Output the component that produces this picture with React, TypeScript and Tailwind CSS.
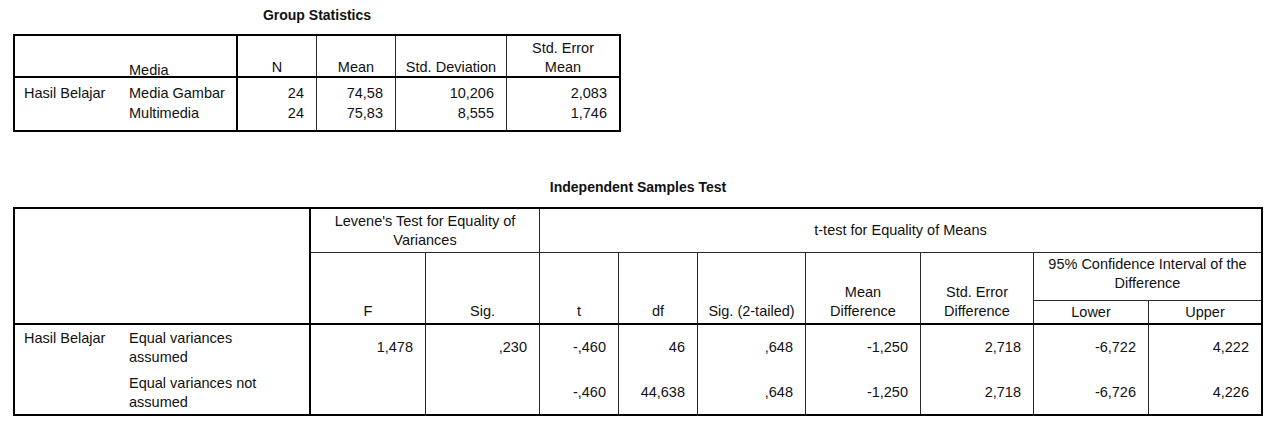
import React from "react";

const thinR = "border-r border-r-[#2a2a2a]";

function HeadCell({
  children,
  className = "",
  inner = "",
}: {
  children: React.ReactNode;
  className?: string;
  inner?: string;
}) {
  return (
    <div className={`flex justify-center text-center leading-[19px] ${className}`}>
      <div className={inner}>{children}</div>
    </div>
  );
}

function Val({ v, last = false }: { v: string; last?: boolean }) {
  return (
    <div className={`flex items-center justify-end pr-[12px] leading-[19px] ${last ? "" : thinR}`}>
      {v}
    </div>
  );
}

function Val1({ v, last = false, pt }: { v: string; last?: boolean; pt: string }) {
  return (
    <div className={`text-right pr-[12px] leading-[19px] ${pt} ${last ? "" : thinR}`}>{v}</div>
  );
}

export default function App() {
  return (
    <div className="w-[1278px] h-[432px] bg-white text-[#111] text-[14.5px] font-['Liberation_Sans',Arial,sans-serif] pt-[6px] overflow-hidden">
      {/* Group Statistics */}
      <div className="ml-[13px] w-[608px] text-center font-bold text-[14px] leading-[19px] h-[19px]">
        Group Statistics
      </div>
      <div className="ml-[13px] mt-[9px] w-[608px] border-2 border-black grid grid-cols-[106px_117px_79px_79px_111px_112px] grid-rows-[42px_25px_27px]">
        <div className="col-span-2 border-r-2 border-b-2 border-black flex items-end pl-[114px] leading-[11px]">
          Media
        </div>
        <HeadCell inner="-mb-[1px]" className={`items-end border-b-2 border-b-black ${thinR}`}>N</HeadCell>
        <HeadCell inner="-mb-[1px]" className={`items-end border-b-2 border-b-black ${thinR}`}>Mean</HeadCell>
        <HeadCell inner="-mb-[1px]" className={`items-end border-b-2 border-b-black ${thinR}`}>Std. Deviation</HeadCell>
        <HeadCell inner="-mb-[1px]" className="items-end border-b-2 border-b-black">
          Std. Error
          <br />
          Mean
        </HeadCell>

        <div className="pl-[9px] pt-[6px] leading-[19px]">Hasil Belajar</div>
        <div className="pl-[8px] pt-[6px] leading-[19px] border-r-2 border-black">Media Gambar</div>
        <Val1 v="24" pt="pt-[6px]" />
        <Val1 v="74,58" pt="pt-[6px]" />
        <Val1 v="10,206" pt="pt-[6px]" />
        <Val1 v="2,083" pt="pt-[6px]" last />

        <div className="pl-[9px] pt-[1px] leading-[19px]"></div>
        <div className="pl-[8px] pt-[1px] leading-[19px] border-r-2 border-black">Multimedia</div>
        <Val1 v="24" pt="pt-[1px]" />
        <Val1 v="75,83" pt="pt-[1px]" />
        <Val1 v="8,555" pt="pt-[1px]" />
        <Val1 v="1,746" pt="pt-[1px]" last />
      </div>

      {/* Independent Samples Test */}
      <div className="ml-[13px] mt-[46px] w-[1250px] text-center font-bold text-[14px] leading-[19px] h-[19px]">
        Independent Samples Test
      </div>
      <div className="ml-[13px] mt-[10px] w-[1250px] border-2 border-black grid grid-cols-[106px_190px_115px_114px_79px_79px_108px_115px_113px_115px_112px] grid-rows-[44px_48px_24px_45px_44px]">
        {/* row-dimension header */}
        <div className="col-start-1 col-end-3 row-start-1 row-end-4 border-r-2 border-b-2 border-black"></div>
        {/* group headers */}
        <HeadCell className={`col-start-3 col-end-5 row-start-1 items-center border-b border-b-[#2a2a2a] ${thinR}`}>
          Levene&apos;s Test for Equality of
          <br />
          Variances
        </HeadCell>
        <HeadCell className="col-start-5 col-end-12 row-start-1 items-center border-b border-b-[#2a2a2a]">
          t-test for Equality of Means
        </HeadCell>
        {/* column headers */}
        <HeadCell className={`col-start-3 row-start-2 row-end-4 items-end pb-[2px] border-b-2 border-b-black ${thinR}`}>F</HeadCell>
        <HeadCell className={`col-start-4 row-start-2 row-end-4 items-end pb-[2px] border-b-2 border-b-black ${thinR}`}>Sig.</HeadCell>
        <HeadCell className={`col-start-5 row-start-2 row-end-4 items-end pb-[2px] border-b-2 border-b-black ${thinR}`}>t</HeadCell>
        <HeadCell className={`col-start-6 row-start-2 row-end-4 items-end pb-[2px] border-b-2 border-b-black ${thinR}`}>df</HeadCell>
        <HeadCell className={`col-start-7 row-start-2 row-end-4 items-end pb-[2px] border-b-2 border-b-black ${thinR}`}>Sig. (2-tailed)</HeadCell>
        <HeadCell className={`col-start-8 row-start-2 row-end-4 items-end pb-[2px] border-b-2 border-b-black ${thinR}`}>
          Mean
          <br />
          Difference
        </HeadCell>
        <HeadCell className={`col-start-9 row-start-2 row-end-4 items-end pb-[2px] border-b-2 border-b-black ${thinR}`}>
          Std. Error
          <br />
          Difference
        </HeadCell>
        <HeadCell className="col-start-10 col-end-12 row-start-2 items-end pb-[7px] border-b border-b-[#2a2a2a]">
          95% Confidence Interval of the
          <br />
          Difference
        </HeadCell>
        <HeadCell className={`col-start-10 row-start-3 items-center border-b-2 border-b-black ${thinR}`}>Lower</HeadCell>
        <HeadCell className="col-start-11 row-start-3 items-center border-b-2 border-b-black">Upper</HeadCell>

        {/* row 1 */}
        <div className="pl-[9px] pt-[4px] leading-[19px]">Hasil Belajar</div>
        <div className="pl-[8px] pt-[4px] leading-[19px] border-r-2 border-black">
          Equal variances
          <br />
          assumed
        </div>
        <Val v="1,478" />
        <Val v=",230" />
        <Val v="-,460" />
        <Val v="46" />
        <Val v=",648" />
        <Val v="-1,250" />
        <Val v="2,718" />
        <Val v="-6,722" />
        <Val v="4,222" last />

        {/* row 2 */}
        <div className="pl-[9px] pt-[4px] leading-[19px]"></div>
        <div className="pl-[8px] pt-[4px] leading-[19px] border-r-2 border-black">
          Equal variances not
          <br />
          assumed
        </div>
        <Val v="" />
        <Val v="" />
        <Val v="-,460" />
        <Val v="44,638" />
        <Val v=",648" />
        <Val v="-1,250" />
        <Val v="2,718" />
        <Val v="-6,726" />
        <Val v="4,226" last />
      </div>
    </div>
  );
}
